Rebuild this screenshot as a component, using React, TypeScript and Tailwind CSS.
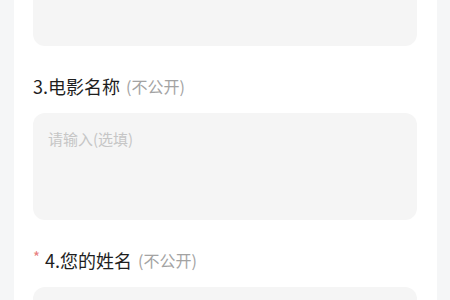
const font = { fontFamily: '"Noto Sans CJK SC", "Noto Sans", sans-serif' };

function Field({ placeholder }: { placeholder?: string }) {
  return (
    <div className="h-[107px] rounded-xl bg-[#f5f5f5] px-[15px] pt-[16px]">
      {placeholder && <p className="text-[15px] leading-5 text-[#c6c6c6]">{placeholder}</p>}
    </div>
  );
}

function Label({ num, title, required = false }: { num: number; title: string; required?: boolean }) {
  return (
    <div className="mt-[28px] mb-[15px] flex h-6 items-center">
      {required && <span className="mr-[5px] -mt-[8px] text-[15px] leading-none text-[#e88080]">*</span>}
      <span className="text-[18px] leading-6 text-[#1e1e1e]">
        {num}.{title}
      </span>
      <span className="ml-[6px] text-[16px] leading-6 text-[#a3a3a3]">(不公开)</span>
    </div>
  );
}

export default function App() {
  return (
    <div className="h-[300px] w-[450px] overflow-hidden bg-[#f5f6f7] pl-[14px] pr-[13px]" style={font}>
      <div className="h-[400px] overflow-hidden bg-white pl-[19px] pr-[20px]">
        <div className="-mt-[61px]">
          <Field />
        </div>
        <Label num={3} title="电影名称" />
        <Field placeholder="请输入(选填)" />
        <Label num={4} title="您的姓名" required />
        <Field />
      </div>
    </div>
  );
}
